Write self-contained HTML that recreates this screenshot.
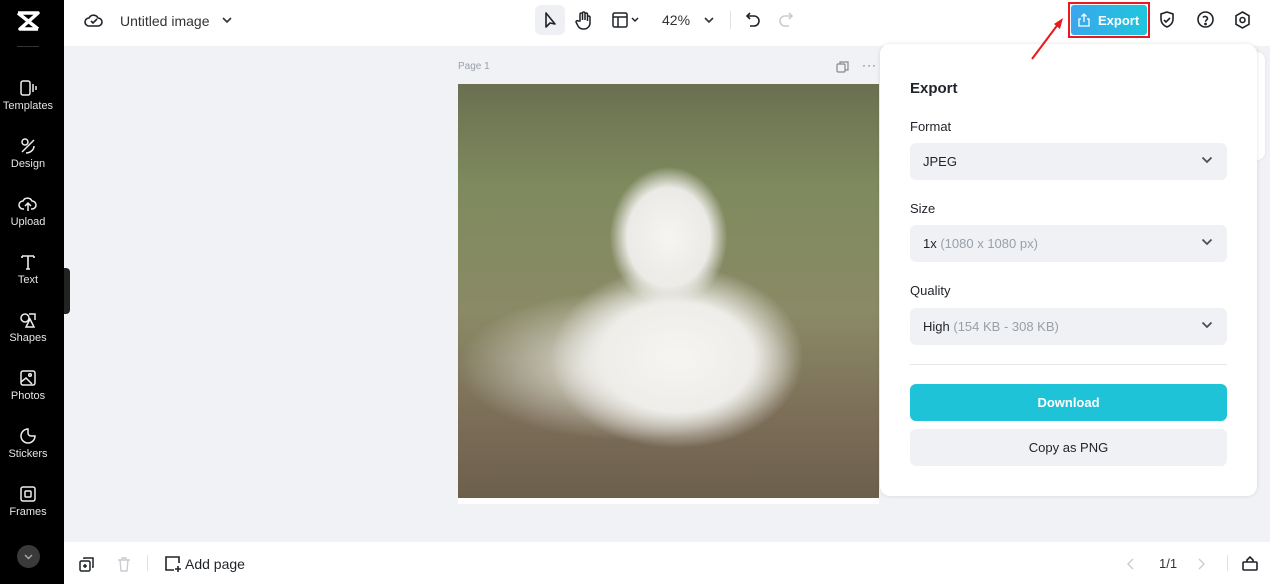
<!DOCTYPE html>
<html><head><meta charset="utf-8"><style>
*{box-sizing:border-box;margin:0;padding:0}
body{width:1270px;height:584px;overflow:hidden;font-family:"Liberation Sans",sans-serif;background:#f0f2f5;position:relative;color:#1f2329}
.side{position:absolute;left:0;top:0;width:64px;height:584px;background:#000}
.si{position:absolute;left:0;width:56px;text-align:center;color:#e5e5e5;font-size:11px}
.si svg{display:block;margin:0 auto 3px}
.top{position:absolute;left:64px;top:0;right:0;height:46px;background:#fff}
.bot{position:absolute;left:64px;bottom:0;right:0;height:42px;background:#fff}
.abs{position:absolute}
.panel{position:absolute;left:880px;top:44px;width:377px;height:452px;background:#fff;border-radius:10px;box-shadow:0 0 4px rgba(0,0,0,.12)}
.lbl{position:absolute;left:30px;font-size:13px;color:#1f2329}
.sel{position:absolute;left:30px;width:317px;height:37px;background:#eff1f4;border-radius:6px;font-size:13px;padding:11px 13px;color:#1f2329}
.sel span{color:#9aa0a8}
.sel svg{position:absolute;right:14px;top:13px}
</style></head><body>
<div class="side">
  <svg class="abs" style="left:15px;top:10px" width="26" height="22" viewBox="0 0 26 22"><path d="M3 3h20L5 19h18M3 3l20 16" stroke="#fff" stroke-width="3.5" fill="none" stroke-linejoin="round"/></svg>
  <div class="abs" style="left:17px;top:46px;width:22px;height:1px;background:#333"></div>
  <div class="si" style="top:79px"><svg width="20" height="18" viewBox="0 0 20 18" fill="none" stroke="#eee" stroke-width="1.5"><rect x="3" y="2" width="9" height="14" rx="2"/><path d="M15 5v8M18 7v4"/></svg>Templates</div>
  <div class="si" style="top:137px"><svg width="20" height="18" viewBox="0 0 20 18" fill="none" stroke="#eee" stroke-width="1.5"><circle cx="7" cy="5" r="3"/><path d="M4 15l12-12M8 16c4 0 8-3 8-7"/></svg>Design</div>
  <div class="si" style="top:195px"><svg width="20" height="18" viewBox="0 0 20 18" fill="none" stroke="#eee" stroke-width="1.5"><path d="M6 14H5a4 4 0 010-8 5 5 0 019 0 4 4 0 010 8h-1M10 16V9M7 11l3-3 3 3"/></svg>Upload</div>
  <div class="si" style="top:253px"><svg width="20" height="18" viewBox="0 0 20 18" fill="none" stroke="#eee" stroke-width="1.6"><path d="M4 3h12M10 3v13M4 3v2M16 3v2M8 16h4"/></svg>Text</div>
  <div class="si" style="top:311px"><svg width="20" height="18" viewBox="0 0 20 18" fill="none" stroke="#eee" stroke-width="1.5"><circle cx="7" cy="7" r="4"/><path d="M11 3h6v6M12 8l-4 8h8z"/></svg>Shapes</div>
  <div class="si" style="top:369px"><svg width="20" height="18" viewBox="0 0 20 18" fill="none" stroke="#eee" stroke-width="1.5"><rect x="3" y="2" width="14" height="14" rx="2"/><circle cx="12" cy="6" r="1.3"/><path d="M3 13l5-4 6 6"/></svg>Photos</div>
  <div class="si" style="top:427px"><svg width="20" height="18" viewBox="0 0 20 18" fill="none" stroke="#eee" stroke-width="1.5"><path d="M10 2a7 7 0 107 7h-4a3 3 0 01-3-3z"/></svg>Stickers</div>
  <div class="si" style="top:485px"><svg width="20" height="18" viewBox="0 0 20 18" fill="none" stroke="#eee" stroke-width="1.5"><rect x="3" y="2" width="14" height="14" rx="2"/><rect x="7" y="6" width="6" height="6" rx="1"/></svg>Frames</div>
  <div class="abs" style="left:17px;top:545px;width:23px;height:23px;border-radius:50%;background:#3a3a3a"><svg width="23" height="23" viewBox="0 0 23 23"><path d="M8 10l3.5 3.5L15 10" stroke="#aaa" stroke-width="1.4" fill="none"/></svg></div>
  <div class="abs" style="left:64px;top:268px;width:6px;height:46px;background:#222;border-radius:0 4px 4px 0"></div>
</div>
<div class="top">
  <svg class="abs" style="left:20px;top:11px" width="20" height="18" viewBox="0 0 20 18" fill="none" stroke="#1f2329" stroke-width="1.6"><path d="M6 15H5a4 4 0 010-8 5 5 0 019 0 4 4 0 010 8z"/><path d="M7 10l2 2 4-4"/></svg>
  <div class="abs" style="left:56px;top:13px;font-size:14px;color:#333">Untitled image</div>
  <svg class="abs" style="left:157px;top:15px" width="12" height="10" viewBox="0 0 12 10"><path d="M2 3l4 4 4-4" stroke="#333" stroke-width="1.6" fill="none"/></svg>
  <div class="abs" style="left:471px;top:5px;width:30px;height:30px;border-radius:6px;background:#eef0f3"></div>
  <svg class="abs" style="left:478px;top:11px" width="16" height="18" viewBox="0 0 16 18"><path d="M4 2v14l4-4 5 1z" stroke="#1f2329" stroke-width="1.6" fill="none" stroke-linejoin="round"/></svg>
  <svg class="abs" style="left:511px;top:10px" width="18" height="20" viewBox="0 0 18 20" fill="none" stroke="#1f2329" stroke-width="1.5"><path d="M5 11V4a1.3 1.3 0 012.5 0v6V3a1.3 1.3 0 012.5 0v7V4a1.3 1.3 0 012.5 0v7-4a1.3 1.3 0 012.5 0v6a6 6 0 01-6 6h-1a6 6 0 01-5-3l-2-4a1.2 1.2 0 012-1z"/></svg>
  <svg class="abs" style="left:548px;top:12px" width="30" height="16" viewBox="0 0 30 16" fill="none" stroke="#1f2329" stroke-width="1.5"><rect x="1" y="1" width="14" height="14" rx="1.5"/><path d="M1 5h14M6 5v10M20 6l3 3 3-3"/></svg>
  <div class="abs" style="left:598px;top:12px;font-size:14px;color:#333">42%</div>
  <svg class="abs" style="left:639px;top:15px" width="12" height="10" viewBox="0 0 12 10"><path d="M2 3l4 4 4-4" stroke="#333" stroke-width="1.6" fill="none"/></svg>
  <div class="abs" style="left:666px;top:11px;width:1px;height:18px;background:#e0e2e6"></div>
  <svg class="abs" style="left:681px;top:11px" width="16" height="18" viewBox="0 0 16 18" fill="none" stroke="#1f2329" stroke-width="1.6"><path d="M5 2L2 5l3 3M2 5h7a5 5 0 010 10H5"/></svg>
  <svg class="abs" style="left:714px;top:11px" width="16" height="18" viewBox="0 0 16 18" fill="none" stroke="#c9ccd1" stroke-width="1.6"><path d="M11 2l3 3-3 3M14 5H7a5 5 0 000 10h4"/></svg>
  <div class="abs" style="left:1004px;top:2px;width:82px;height:36px;border:2px solid #e8191f"></div>
  <div class="abs" style="left:1007px;top:5px;width:76px;height:30px;background:linear-gradient(90deg,#3aa6ee,#1ec6dc);border-radius:3px;color:#fff;font-size:13px;font-weight:bold;padding:8px 0 0 27px">Export</div>
  <svg class="abs" style="left:1014px;top:13px" width="12" height="14" viewBox="0 0 12 14" fill="none" stroke="#fff" stroke-width="1.3"><path d="M3 6H1v7h10V6H9M6 9V1M3.5 3.5L6 1l2.5 2.5"/></svg>
  <svg class="abs" style="left:1094px;top:10px" width="18" height="20" viewBox="0 0 18 20" fill="none" stroke="#1f2329" stroke-width="1.6"><path d="M9 2l6 2v5c0 4-3 7-6 8-3-1-6-4-6-8V4z"/><path d="M6 10l2 2 4-4"/></svg>
  <svg class="abs" style="left:1132px;top:10px" width="19" height="19" viewBox="0 0 19 19" fill="none" stroke="#1f2329" stroke-width="1.6"><circle cx="9.5" cy="9.5" r="7.5"/><path d="M7 7.5a2.5 2.5 0 014.5 1c0 1.5-2 1.8-2 3.2"/><circle cx="9.5" cy="14" r=".6" fill="#1f2329"/></svg>
  <svg class="abs" style="left:1169px;top:10px" width="19" height="20" viewBox="0 0 19 20" fill="none" stroke="#1f2329" stroke-width="1.6"><path d="M9.5 2l6.5 3.7v8.6L9.5 18 3 14.3V5.7z"/><circle cx="9.5" cy="10" r="2.5"/></svg>
</div>
<div class="abs" style="left:458px;top:61px;font-size:10px;color:#9aa0a8">Page 1</div>
<svg class="abs" style="left:836px;top:60px" width="14" height="14" viewBox="0 0 14 14" fill="none" stroke="#888" stroke-width="1.2"><rect x="1" y="4" width="8" height="8" rx="1"/><path d="M4 4V2h8v8h-3"/></svg>
<div class="abs" style="left:862px;top:58px;font-size:12px;color:#666;letter-spacing:1px">···</div>
<div class="abs" style="left:458px;top:84px;width:421px;height:414px;background:radial-gradient(ellipse 30% 22% at 52% 66%,#f6f5f2 0,#eeede9 60%,rgba(236,235,230,0) 100%),radial-gradient(ellipse 40% 18% at 40% 68%,#eeeee8 0,rgba(230,230,224,0) 100%),radial-gradient(ellipse 14% 17% at 50% 37%,#f6f5f2 0,#ebeae6 70%,rgba(235,234,230,0) 100%),linear-gradient(180deg,#6a7050 0%,#7f8a5e 25%,#8a8a66 55%,#7c6e58 80%,#6c5f4c 100%)"></div>
<div class="abs" style="left:458px;top:498px;width:421px;height:6px;background:#fff"></div>
<div class="abs" style="left:1252px;top:52px;width:13px;height:108px;background:#fff;border-radius:0 8px 8px 0;box-shadow:0 0 3px rgba(0,0,0,.08)"></div>
<div class="panel">
  <div class="abs" style="left:30px;top:36px;font-size:15px;font-weight:bold">Export</div>
  <div class="lbl" style="top:75px">Format</div>
  <div class="sel" style="top:99px">JPEG<svg width="12" height="8" viewBox="0 0 12 8"><path d="M1.5 1.5L6 6l4.5-4.5" stroke="#4a4f57" stroke-width="1.8" fill="none"/></svg></div>
  <div class="lbl" style="top:157px">Size</div>
  <div class="sel" style="top:181px">1x <span>(1080 x 1080 px)</span><svg width="12" height="8" viewBox="0 0 12 8"><path d="M1.5 1.5L6 6l4.5-4.5" stroke="#4a4f57" stroke-width="1.8" fill="none"/></svg></div>
  <div class="lbl" style="top:239px">Quality</div>
  <div class="sel" style="top:264px">High <span>(154 KB - 308 KB)</span><svg width="12" height="8" viewBox="0 0 12 8"><path d="M1.5 1.5L6 6l4.5-4.5" stroke="#4a4f57" stroke-width="1.8" fill="none"/></svg></div>
  <div class="abs" style="left:30px;top:320px;width:317px;height:1px;background:#e5e7eb"></div>
  <div class="abs" style="left:30px;top:340px;width:317px;height:37px;background:#1fc3d8;border-radius:6px;color:#fff;font-size:13px;font-weight:bold;text-align:center;line-height:37px">Download</div>
  <div class="abs" style="left:30px;top:385px;width:317px;height:37px;background:#eff1f4;border-radius:6px;font-size:13px;text-align:center;line-height:37px">Copy as PNG</div>
</div>
<svg class="abs" style="left:1028px;top:14px;z-index:10" width="40" height="50" viewBox="0 0 40 50"><path d="M4 45L31 9" stroke="#e8191f" stroke-width="2"/><path d="M35 4l-3 11-6-5z" fill="#e8191f"/></svg>
<div class="bot">
  <svg class="abs" style="left:15px;top:14px" width="16" height="16" viewBox="0 0 16 16" fill="none" stroke="#1f2329" stroke-width="1.5"><rect x="1" y="5" width="10" height="10" rx="1.5"/><path d="M5 3V2h9v9h-1M6 8v4M4 10h4"/></svg>
  <svg class="abs" style="left:53px;top:14px" width="14" height="16" viewBox="0 0 14 16" fill="none" stroke="#c9ccd1" stroke-width="1.4"><path d="M1 4h12M5 4V2h4v2M3 4l1 11h6l1-11"/></svg>
  <div class="abs" style="left:83px;top:13px;width:1px;height:16px;background:#e0e2e6"></div>
  <svg class="abs" style="left:100px;top:13px" width="18" height="18" viewBox="0 0 18 18" fill="none" stroke="#1f2329" stroke-width="1.6"><path d="M15 8V2H2v13h8M14 11v6M11 14h6"/></svg>
  <div class="abs" style="left:121px;top:14px;font-size:14px;color:#1f2329">Add page</div>
  <svg class="abs" style="left:1062px;top:15px" width="10" height="14" viewBox="0 0 10 14"><path d="M7 2L2 7l5 5" stroke="#c9ccd1" stroke-width="1.4" fill="none"/></svg>
  <div class="abs" style="left:1095px;top:14px;font-size:13px;color:#333">1/1</div>
  <svg class="abs" style="left:1132px;top:15px" width="10" height="14" viewBox="0 0 10 14"><path d="M3 2l5 5-5 5" stroke="#c9ccd1" stroke-width="1.4" fill="none"/></svg>
  <div class="abs" style="left:1163px;top:13px;width:1px;height:16px;background:#e0e2e6"></div>
  <svg class="abs" style="left:1178px;top:13px" width="16" height="16" viewBox="0 0 16 16" fill="none" stroke="#1f2329" stroke-width="1.6"><rect x="1" y="7" width="14" height="8" rx="1"/><path d="M5 7V5l3-3 3 3v2"/></svg>
</div>
</body></html>
